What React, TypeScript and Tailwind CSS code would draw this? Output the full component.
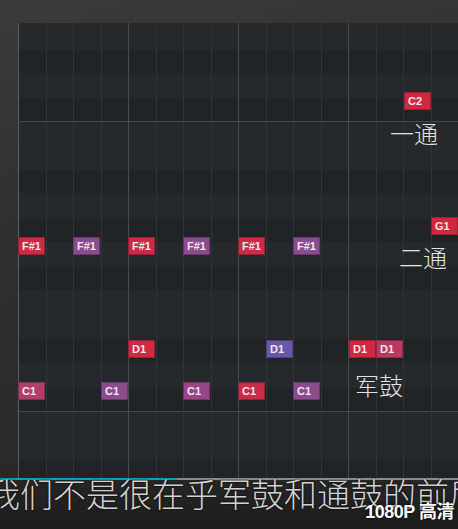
import React from 'react';

const COLS = 16;
const MAJOR = [0, 4, 8, 12];

// row shading, top to bottom (d = darker stripe); octave lines under rows 3 and 15
const ROWS = [
  { h: 26.5, d: false },
  { h: 24.17, d: true },
  { h: 24.17, d: false },
  { h: 24.17, d: true },
  { h: 24.17, d: false },
  { h: 24.17, d: false },
  { h: 24.17, d: true },
  { h: 24.17, d: false },
  { h: 24.17, d: true },
  { h: 24.17, d: false },
  { h: 24.17, d: true },
  { h: 24.17, d: false },
  { h: 24.17, d: false },
  { h: 24.17, d: true },
  { h: 24.17, d: false },
  { h: 24.17, d: true },
  { h: 24.17, d: false },
  { h: 24.17, d: false },
  { h: 24.17, d: true },
];

const RED = '#cc2a45';
const PURPLE = '#8b4b91';

const NOTES = [
  { label: 'C2', x: 404, y: 92, c: '#d2283f' },
  { label: 'G1', x: 431, y: 217, c: '#d2283f' },
  { label: 'F#1', x: 18, y: 237, c: RED },
  { label: 'F#1', x: 73, y: 237, c: PURPLE },
  { label: 'F#1', x: 128, y: 237, c: RED },
  { label: 'F#1', x: 183, y: 237, c: PURPLE },
  { label: 'F#1', x: 238, y: 237, c: RED },
  { label: 'F#1', x: 293, y: 237, c: PURPLE },
  { label: 'D1', x: 128, y: 340, c: '#cd2a44' },
  { label: 'D1', x: 266, y: 340, c: '#6b56a7' },
  { label: 'D1', x: 349, y: 340, c: '#d0283f' },
  { label: 'D1', x: 376, y: 340, c: '#b9395f' },
  { label: 'C1', x: 18, y: 382, c: '#b23c6c' },
  { label: 'C1', x: 101, y: 382, c: '#8d4a8f' },
  { label: 'C1', x: 183, y: 382, c: '#974585' },
  { label: 'C1', x: 238, y: 382, c: '#c92b48' },
  { label: 'C1', x: 293, y: 382, c: '#8e4a8f' },
];

const LABELS = [
  { text: '一通', x: 390, y: 121 },
  { text: '二通', x: 399, y: 245 },
  { text: '军鼓', x: 355, y: 373 },
];

const PianoGrid = () => (
  <div className="relative ml-[18px] h-[455px] w-[440px] overflow-hidden">
    {/* row stripes */}
    <div className="flex h-full flex-col">
      {ROWS.map((r, i) => (
        <div
          key={i}
          style={{ height: r.h }}
          className={
            'shrink-0 border-b ' +
            (r.d ? 'bg-[#212427] ' : 'bg-[#25292c] ') +
            (i === 3 || i === 15 ? 'border-[#43484b]' : 'border-[#25282a]')
          }
        />
      ))}
    </div>

    {/* column lines */}
    <div className="absolute inset-0 flex">
      {Array.from({ length: COLS }).map((_, i) => (
        <div
          key={i}
          className={
            'h-full w-[27.5px] shrink-0 border-l ' +
            (i === 0 ? 'border-[#5a5e61]' : MAJOR.includes(i) ? 'border-[#464b4f]' : 'border-[#2f3437]')
          }
        />
      ))}
    </div>

    {NOTES.map((n, i) => (
      <div
        key={i}
        className="absolute flex h-[18px] w-[27px] items-center border border-black/25 pl-[3px] font-['Liberation_Sans',sans-serif] text-[11px] font-bold leading-none text-[#f3e6ec]"
        style={{ left: n.x - 18, top: n.y - 23, backgroundColor: n.c }}
      >
        {n.label}
      </div>
    ))}

    {LABELS.map((l, i) => (
      <div
        key={i}
        className="absolute font-['Noto_Sans_CJK_SC',sans-serif] text-[24px] font-light leading-none text-[#e2e2e2]"
        style={{ left: l.x - 18, top: l.y - 23 }}
      >
        {l.text}
      </div>
    ))}
  </div>
);

export default function App() {
  return (
    <div className="relative flex h-[529px] w-[458px] flex-col overflow-hidden bg-[linear-gradient(165deg,#3b3b3b_0%,#303030_35%,#2a2a2a_70%,#1e1e1e_100%)] pt-[23px]">
      <PianoGrid />

      {/* progress bar */}
      <div className="flex h-[2px] w-full">
        <div className="h-full w-[177px] bg-[#00a1d6]" />
        <div className="h-full flex-1 bg-[#8a8a8a]" />
      </div>

      {/* subtitle area */}
      <div className="relative flex-1 bg-[linear-gradient(180deg,#262626_0%,#1c1c1c_100%)]">
        <div className="-mt-[3px] ml-[-13px] whitespace-nowrap font-['Noto_Sans_CJK_SC',sans-serif] text-[33px] font-light leading-none text-[#d2d2d2] [text-shadow:0_0_2px_#000]">
          我们不是很在乎军鼓和通鼓的前后
        </div>
        <div className="absolute right-[4px] top-[23px] font-['Liberation_Sans','Noto_Sans_CJK_SC',sans-serif] text-[18px] font-bold leading-none tracking-[-0.5px] text-white [text-shadow:0_0_3px_#000]">
          1080P 高清
        </div>
      </div>
    </div>
  );
}
